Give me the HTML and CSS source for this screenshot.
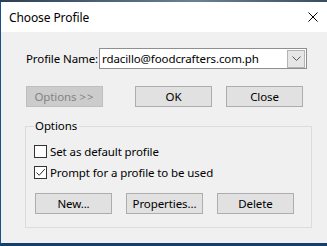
FILE: index.html
```html
<!DOCTYPE html>
<html lang="en">
<head>
  <meta charset="UTF-8" />
  <title>Choose Profile</title>
  <link rel="stylesheet" href="styles.css">
</head>
<body>

  <div class="desktop"></div>

  <div class="window">
    <div class="titlebar">
      <span class="title">Choose Profile</span>
      <svg class="close-x" width="10" height="10" viewBox="0 0 10 10">
        <path d="M0.5 0.5 L9.5 9.5 M9.5 0.5 L0.5 9.5" stroke="#000" stroke-width="1" fill="none"/>
      </svg>
    </div>

    <div class="content">
      <!-- profile picker -->
      <div class="profile-row">
        <label class="profile-label">Profile Name:</label>
        <div class="combo">
          <span class="combo-text">rdacillo@foodcrafters.com.ph</span>
          <span class="combo-btn">
            <svg width="9" height="5" viewBox="0 0 9 5">
              <path d="M0.5 0.5 L4.5 4.5 L8.5 0.5" stroke="#555" stroke-width="1" fill="none"/>
            </svg>
          </span>
        </div>
      </div>

      <div class="button-row">
        <button class="btn btn-disabled" disabled>Options <span class="arrows">&gt;&gt;</span></button>
        <button class="btn btn-ok">OK</button>
        <button class="btn btn-close">Close</button>
      </div>

      <!-- options group -->
      <div class="group">
        <span class="group-title">Options</span>
        <div class="check-row first">
          <span class="checkbox"></span>
          <span>Set as default profile</span>
        </div>
        <div class="check-row">
          <span class="checkbox">
            <svg width="11" height="11" viewBox="0 0 11 11">
              <path d="M1.5 5.5 L4.2 8.3 L9.8 2" stroke="#333" stroke-width="1" fill="none"/>
            </svg>
          </span>
          <span>Prompt for a profile to be used</span>
        </div>
        <div class="group-buttons">
          <button class="btn">New...</button>
          <button class="btn">Properties...</button>
          <button class="btn">Delete</button>
        </div>
      </div>
    </div>
  </div>

</body>
</html>
```

FILE: styles.css
```css
body {
  margin: 0;
  background-color: #f0f0f0;
  font-family: 'Noto Sans', 'Liberation Sans', sans-serif;
  font-size: 11.5px;
  letter-spacing: -0.1px;
  color: #000;
  overflow: hidden;
}

.desktop {
  height: 2px;
  background: linear-gradient(90deg, #2e3f55 0%, #51647c 35%, #6d7f95 60%, #3a4b62 100%);
}

.window {
  height: 241px;
  border-left: 1px solid #1a4f8a;
  border-bottom: 3px solid #133f6c;
  background-color: #f0f0f0;
}

.titlebar {
  height: 30px;
  background-color: #fff;
  display: flex;
  align-items: center;
  justify-content: space-between;
  padding: 0 9px 0 8px;
}

.title {
  font-size: 12px;
  line-height: 16px;
  margin-top: 1px;
}

.close-x {
  display: block;
}

.content {
  padding: 16px 0 0 25px;
}

.profile-row {
  display: flex;
  align-items: center;
  height: 21px;
}

.profile-label {
  flex-shrink: 0;
  width: 73px;
  white-space: nowrap;
}

.combo {
  flex-shrink: 0;
  width: 203px;
  height: 19px;
  border: 1px solid #8f8f8f;
  background-color: #fff;
  display: flex;
  align-items: center;
  justify-content: space-between;
  padding: 0 1px 0 2px;
}

.combo-btn {
  width: 16px;
  height: 16px;
  border: 1px solid #b4b4b4;
  background-color: #e6e6e6;
  display: flex;
  align-items: center;
  justify-content: center;
}

.combo-btn svg {
  display: block;
}

.button-row {
  display: flex;
  margin-top: 17px;
}

.btn {
  flex-shrink: 0;
  width: 77px;
  height: 21px;
  padding: 0;
  border: 1px solid #adadad;
  background-color: #e1e1e1;
  font-family: inherit;
  font-size: 11.5px;
  letter-spacing: -0.1px;
  color: #000;
}

.btn-disabled {
  background-color: #cccccc;
  border-color: #bfbfbf;
  color: #838383;
}

.arrows {
  letter-spacing: 1px;
}

.btn-ok {
  margin-left: 32px;
}

.btn-close {
  margin-left: 14px;
}

.group {
  width: 277px;
  margin: 19px 0 0 -1px;
  border: 1px solid #dcdcdc;
  padding: 0 0 13px 8px;
}

.group-title {
  display: block;
  width: fit-content;
  margin: -9px 0 0 0;
  padding: 0 2px 0 1px;
  line-height: 16px;
  background-color: #f0f0f0;
}

.check-row {
  display: flex;
  align-items: center;
  height: 21px;
  gap: 3px;
}

.check-row.first {
  margin-top: 7px;
}

.checkbox {
  width: 11px;
  height: 11px;
  border: 1px solid #333;
  background-color: #fff;
  display: flex;
}

.checkbox svg {
  display: block;
}

.group-buttons {
  display: flex;
  gap: 14px;
  margin: 10px 0 0 1px;
}
```
